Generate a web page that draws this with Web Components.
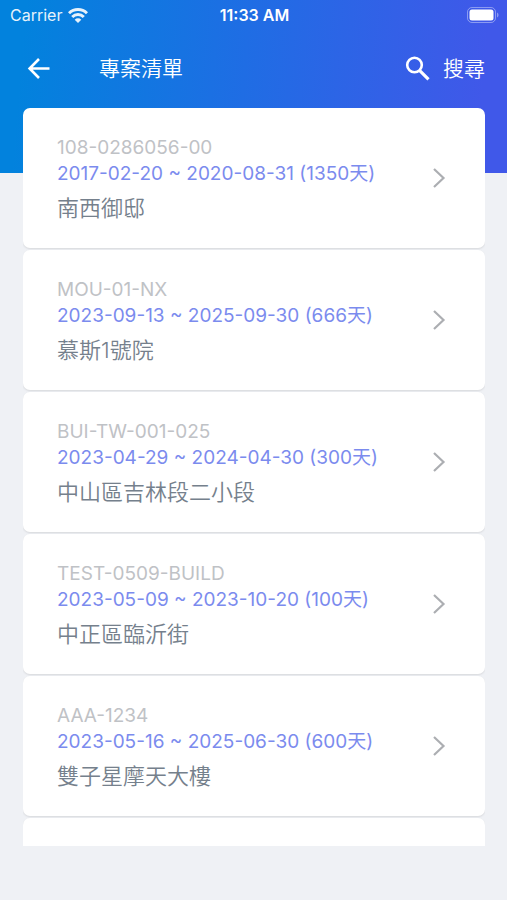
<!DOCTYPE html>
<html lang="zh-Hant">
<head>
<meta charset="utf-8">
<meta name="viewport" content="width=device-width, initial-scale=1">
<title>專案清單</title>
<style>
  body {
    margin: 0;
    background: #eff1f5;
    font-family: Inter, "Noto Sans CJK TC", sans-serif;
  }
</style>
</head>
<body>
<app-screen>
  <status-bar slot="top" carrier="Carrier" time="11:33 AM"></status-bar>
  <nav-bar slot="top">
    專案清單
    <span slot="action">搜尋</span>
  </nav-bar>
  <project-list></project-list>
</app-screen>

<script>
const projects = [
  { code: '108-0286056-00', period: '2017-02-20 ~ 2020-08-31 (1350天)', name: '南西御邸' },
  { code: 'MOU-01-NX', period: '2023-09-13 ~ 2025-09-30 (666天)', name: '慕斯1號院' },
  { code: 'BUI-TW-001-025', period: '2023-04-29 ~ 2024-04-30 (300天)', name: '中山區吉林段二小段' },
  { code: 'TEST-0509-BUILD', period: '2023-05-09 ~ 2023-10-20 (100天)', name: '中正區臨沂街' },
  { code: 'AAA-1234', period: '2023-05-16 ~ 2025-06-30 (600天)', name: '雙子星摩天大樓' }
]

class AppScreen extends HTMLElement {
  constructor() {
    super()
    this.attachShadow({ mode: 'open' })
    this.shadowRoot.innerHTML = `
      <style>
        :host {
          display: flex;
          flex-direction: column;
          box-sizing: border-box;
          height: 100vh;
          padding-bottom: 54px;
          background: linear-gradient(95deg, #0282dd 5%, #1f6de4 48%, #4058e9 94%) no-repeat 0 0 / 100% 173px;
        }
        main { flex: 1; min-height: 0; padding: 0 22px 0 23px; }
      </style>
      <slot name="top"></slot>
      <main><slot></slot></main>
    `
  }
}

class StatusBar extends HTMLElement {
  constructor() {
    super()
    this.attachShadow({ mode: 'open' })
  }

  connectedCallback() {
    this.shadowRoot.innerHTML = `
      <style>
        :host {
          display: grid;
          grid-template-columns: 1fr auto 1fr;
          align-items: center;
          height: 30px;
          padding: 0 8px 0 10px;
          color: #fff;
          font-size: 16px;
          line-height: 20px;
        }
        .carrier { display: flex; align-items: center; gap: 6px; opacity: 0.9; }
        .time { font-weight: 600; }
        .battery { justify-self: end; }
        svg { display: block; }
      </style>
      <span class="carrier">
        ${this.getAttribute('carrier')}
        <svg width="20" height="15" viewBox="0 0 20 15" fill="none" stroke="#fff" stroke-width="3">
          <path d="M1 5.3a12.8 12.8 0 0 1 18 0M4.2 9a8.2 8.2 0 0 1 11.6 0" />
          <path d="M10 15 6.700 11.700a4.700 4.700 0 0 1 6.600 0z" fill="#fff" stroke="none" />
        </svg>
      </span>
      <span class="time">${this.getAttribute('time')}</span>
      <svg class="battery" width="32" height="16" viewBox="0 0 32 16">
        <rect x=".5" y=".5" width="28" height="15" rx="4.5" fill="none" stroke="#fff" stroke-opacity=".4" />
        <rect x="2.5" y="2.5" width="24" height="11" rx="2.5" fill="#fff" />
        <path d="M30 5.5c2 .8 2 4.2 0 5z" fill="#fff" fill-opacity=".4" />
      </svg>
    `
  }
}

class NavBar extends HTMLElement {
  constructor() {
    super()
    this.attachShadow({ mode: 'open' })
    this.shadowRoot.innerHTML = `
      <style>
        :host {
          display: flex;
          align-items: center;
          height: 78px;
          padding: 0 22px 0 26px;
          color: #fff;
          font-size: 21px;
          font-weight: 350;
          line-height: 30px;
        }
        button {
          display: flex;
          align-items: center;
          gap: 12px;
          padding: 0;
          border: 0;
          background: none;
          color: inherit;
          font: inherit;
        }
        h1 { flex: 1; margin: 0 0 0 47px; font: inherit; }
        svg { display: block; }
      </style>
      <button type="button" aria-label="返回">
        <svg width="26" height="26" viewBox="0 0 26 26" fill="none" stroke="#fff" stroke-width="2.6">
          <path d="M23.5 12.500H4M13 3 3.600 12.500l9.400 9.500" />
        </svg>
      </button>
      <h1><slot></slot></h1>
      <button type="button">
        <svg width="26" height="26" viewBox="0 0 26 26" fill="none" stroke="#fff" stroke-width="2.6">
          <circle cx="9.500" cy="9" r="7.300" />
          <path d="m14.500 14.300 9 9" stroke-width="3.200" />
        </svg>
        <slot name="action"></slot>
      </button>
    `
  }
}

class ProjectCard extends HTMLElement {
  constructor() {
    super()
    this.attachShadow({ mode: 'open' })
    this.shadowRoot.innerHTML = `
      <style>
        :host { display: block; }
        a {
          display: flex;
          align-items: center;
          box-sizing: border-box;
          min-height: 140px;
          padding: 0 38px 0 34px;
          border-radius: 7px;
          background: #fff;
          box-shadow: 0 1px 2px rgba(0, 0, 0, 0.1);
          text-decoration: none;
          font-size: 19px;
          line-height: 26px;
        }
        .info { flex: 1; display: flex; flex-direction: column; }
        .code { color: #bfc2c6; }
        .period { color: #7b8bee; }
        .name { margin-top: 8px; color: #75808c; font-size: 22px; font-weight: 350; }
      </style>
      <a href="#">
        <div class="info">
          <span class="code"><slot name="code"></slot></span>
          <span class="period"><slot name="period"></slot></span>
          <span class="name"><slot></slot></span>
        </div>
        <svg width="16" height="22" viewBox="0 0 16 22" fill="none" stroke="#acaeb2" stroke-width="2.2">
          <path d="m3 2 9.5 9L3 20" />
        </svg>
      </a>
    `
  }
}

class ProjectList extends HTMLElement {
  constructor() {
    super()
    this.attachShadow({ mode: 'open' })
  }

  connectedCallback() {
    this.shadowRoot.innerHTML = `
      <style>
        :host {
          display: flex;
          flex-direction: column;
          gap: 2px;
          height: 100%;
          overflow: hidden;
        }
        project-card { flex: none; }
      </style>
      ${projects.map((p) => `
        <project-card>
          <span slot="code">${p.code}</span>
          <span slot="period">${p.period}</span>
          ${p.name}
        </project-card>
      `).join('')}
      <project-card></project-card>
    `
  }
}

customElements.define('app-screen', AppScreen)
customElements.define('status-bar', StatusBar)
customElements.define('nav-bar', NavBar)
customElements.define('project-card', ProjectCard)
customElements.define('project-list', ProjectList)
</script>
</body>
</html>
